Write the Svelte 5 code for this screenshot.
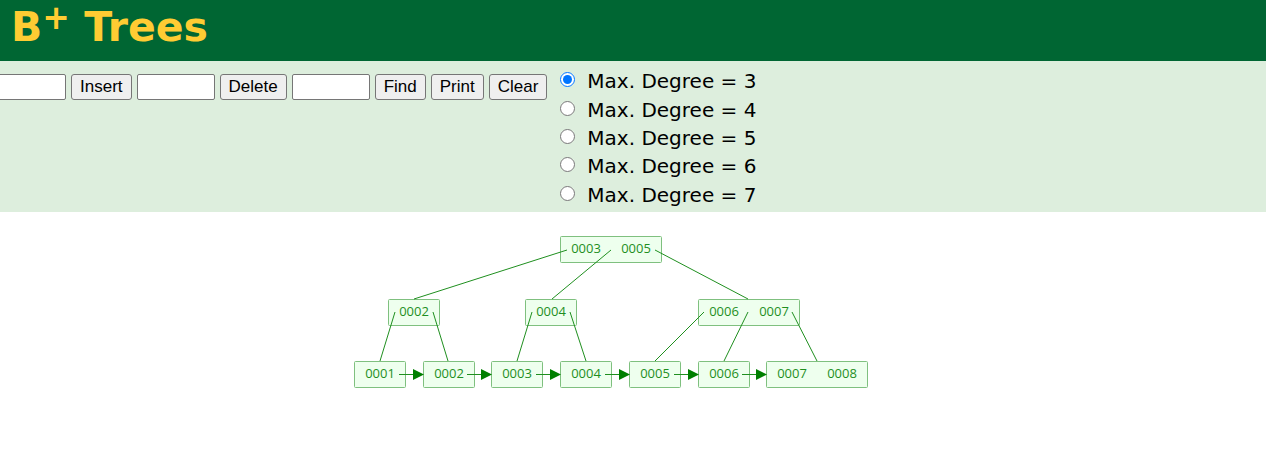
<script lang="ts">
  type TreeNode = { x: number; y: number; keys: string[] };

  const KEY_WIDTH = 50;
  const NODE_HEIGHT = 26;

  let degree = $state(3);
  let insertValue = $state('');
  let deleteValue = $state('');
  let findValue = $state('');

  const degrees = [3, 4, 5, 6, 7];

  const nodes: TreeNode[] = [
    { x: 560, y: 24, keys: ['0003', '0005'] },
    { x: 388, y: 87, keys: ['0002'] },
    { x: 525, y: 87, keys: ['0004'] },
    { x: 698, y: 87, keys: ['0006', '0007'] },
    { x: 354, y: 149, keys: ['0001'] },
    { x: 423, y: 149, keys: ['0002'] },
    { x: 491, y: 149, keys: ['0003'] },
    { x: 560, y: 149, keys: ['0004'] },
    { x: 629, y: 149, keys: ['0005'] },
    { x: 698, y: 149, keys: ['0006'] },
    { x: 766, y: 149, keys: ['0007', '0008'] }
  ];

  // parent slot -> top of child
  const edges = [
    [567, 38, 414, 87],
    [611, 38, 552, 87],
    [655, 38, 748, 87],
    [395, 100, 380, 149],
    [433, 100, 448, 149],
    [532, 100, 517, 149],
    [570, 100, 586, 149],
    [704, 100, 655, 149],
    [748, 100, 724, 149],
    [792, 100, 817, 149]
  ];

  // x where each leaf link starts
  const links = [399, 467, 536, 605, 674, 742];
</script>

<header>
  <h1>B<sup>+</sup> Trees</h1>
</header>

<form class="controls" onsubmit={(e) => e.preventDefault()}>
  <div class="actions">
    <input type="text" aria-label="Value to insert" bind:value={insertValue} />
    <button type="button">Insert</button>
    <input type="text" aria-label="Value to delete" bind:value={deleteValue} />
    <button type="button">Delete</button>
    <input type="text" aria-label="Value to find" bind:value={findValue} />
    <button type="button">Find</button>
    <button type="button">Print</button>
    <button type="button">Clear</button>
  </div>

  <div class="degrees">
    {#each degrees as d}
      <label>
        <input type="radio" name="degree" value={d} bind:group={degree} />
        <span>Max. Degree = {d}</span>
      </label>
    {/each}
  </div>
</form>

<main>
  <svg class="tree" role="img" aria-label="B+ tree">
    {#each nodes as node}
      <rect
        class="node"
        x={node.x + 0.5}
        y={node.y + 0.5}
        width={node.keys.length * KEY_WIDTH + 1}
        height={NODE_HEIGHT}
        rx="1"
      />
      {#each node.keys as key, i}
        <text x={node.x + 26 + i * KEY_WIDTH} y={node.y + 17}>{key}</text>
      {/each}
    {/each}

    {#each edges as [x1, y1, x2, y2]}
      <line class="edge" {x1} {y1} {x2} {y2} />
    {/each}

    {#each links as x}
      <line class="link" x1={x} y1="162.5" x2={x + 16} y2="162.5" />
      <polygon points="{x + 14},157 {x + 25},162.5 {x + 14},168" />
    {/each}
  </svg>
</main>

<style>
  :global(body) {
    margin: 0;
    background: #fff;
    font-family: Verdana, 'DejaVu Sans', sans-serif;
  }

  header {
    background: #006633;
    color: #ffcc33;
    padding: 0 11px 6px;
  }

  h1 {
    margin: 0;
    font-size: 41px;
    line-height: 55px;
    font-weight: bold;
  }

  sup {
    font-size: 33px;
    line-height: 0;
    vertical-align: 12px;
  }

  .controls {
    display: flex;
    align-items: flex-start;
    gap: 13px;
    padding: 6px 0 3px;
    background: #ddeedd;
    overflow: hidden;
  }

  .actions {
    display: flex;
    gap: 5px;
    margin: 7px 0 0 -12px;
  }

  .actions input,
  .actions button {
    box-sizing: border-box;
    height: 26px;
    border: 1px solid #767676;
    font-family: 'Liberation Sans', Arial, sans-serif;
    font-size: 17px;
  }

  .actions input {
    width: 78px;
    padding: 1px 2px;
    border-radius: 2px;
    background: #fff;
  }

  .actions button {
    padding: 0 8px;
    border-radius: 3px;
    background: #efefef;
    color: #000;
    line-height: 24px;
  }

  .degrees {
    display: grid;
    grid-auto-rows: 1fr;
    min-height: 142px;
    font-size: 20px;
    line-height: 24px;
  }

  label {
    display: flex;
    align-items: center;
    gap: 12px;
  }

  label input {
    width: 15px;
    height: 15px;
    margin: 0 0 3px;
  }

  .tree {
    display: block;
    width: 100%;
    height: 241px;
  }

  .node {
    fill: #eeffee;
    stroke: #7fc07f;
    stroke-width: 1px;
  }

  .tree text {
    fill: #1f8f1f;
    font-family: 'Open Sans', 'Noto Sans', sans-serif;
    font-size: 13px;
    text-anchor: middle;
  }

  .edge,
  .link {
    stroke: #1f8f1f;
    stroke-width: 1px;
  }

  polygon {
    fill: #007f00;
  }
</style>
